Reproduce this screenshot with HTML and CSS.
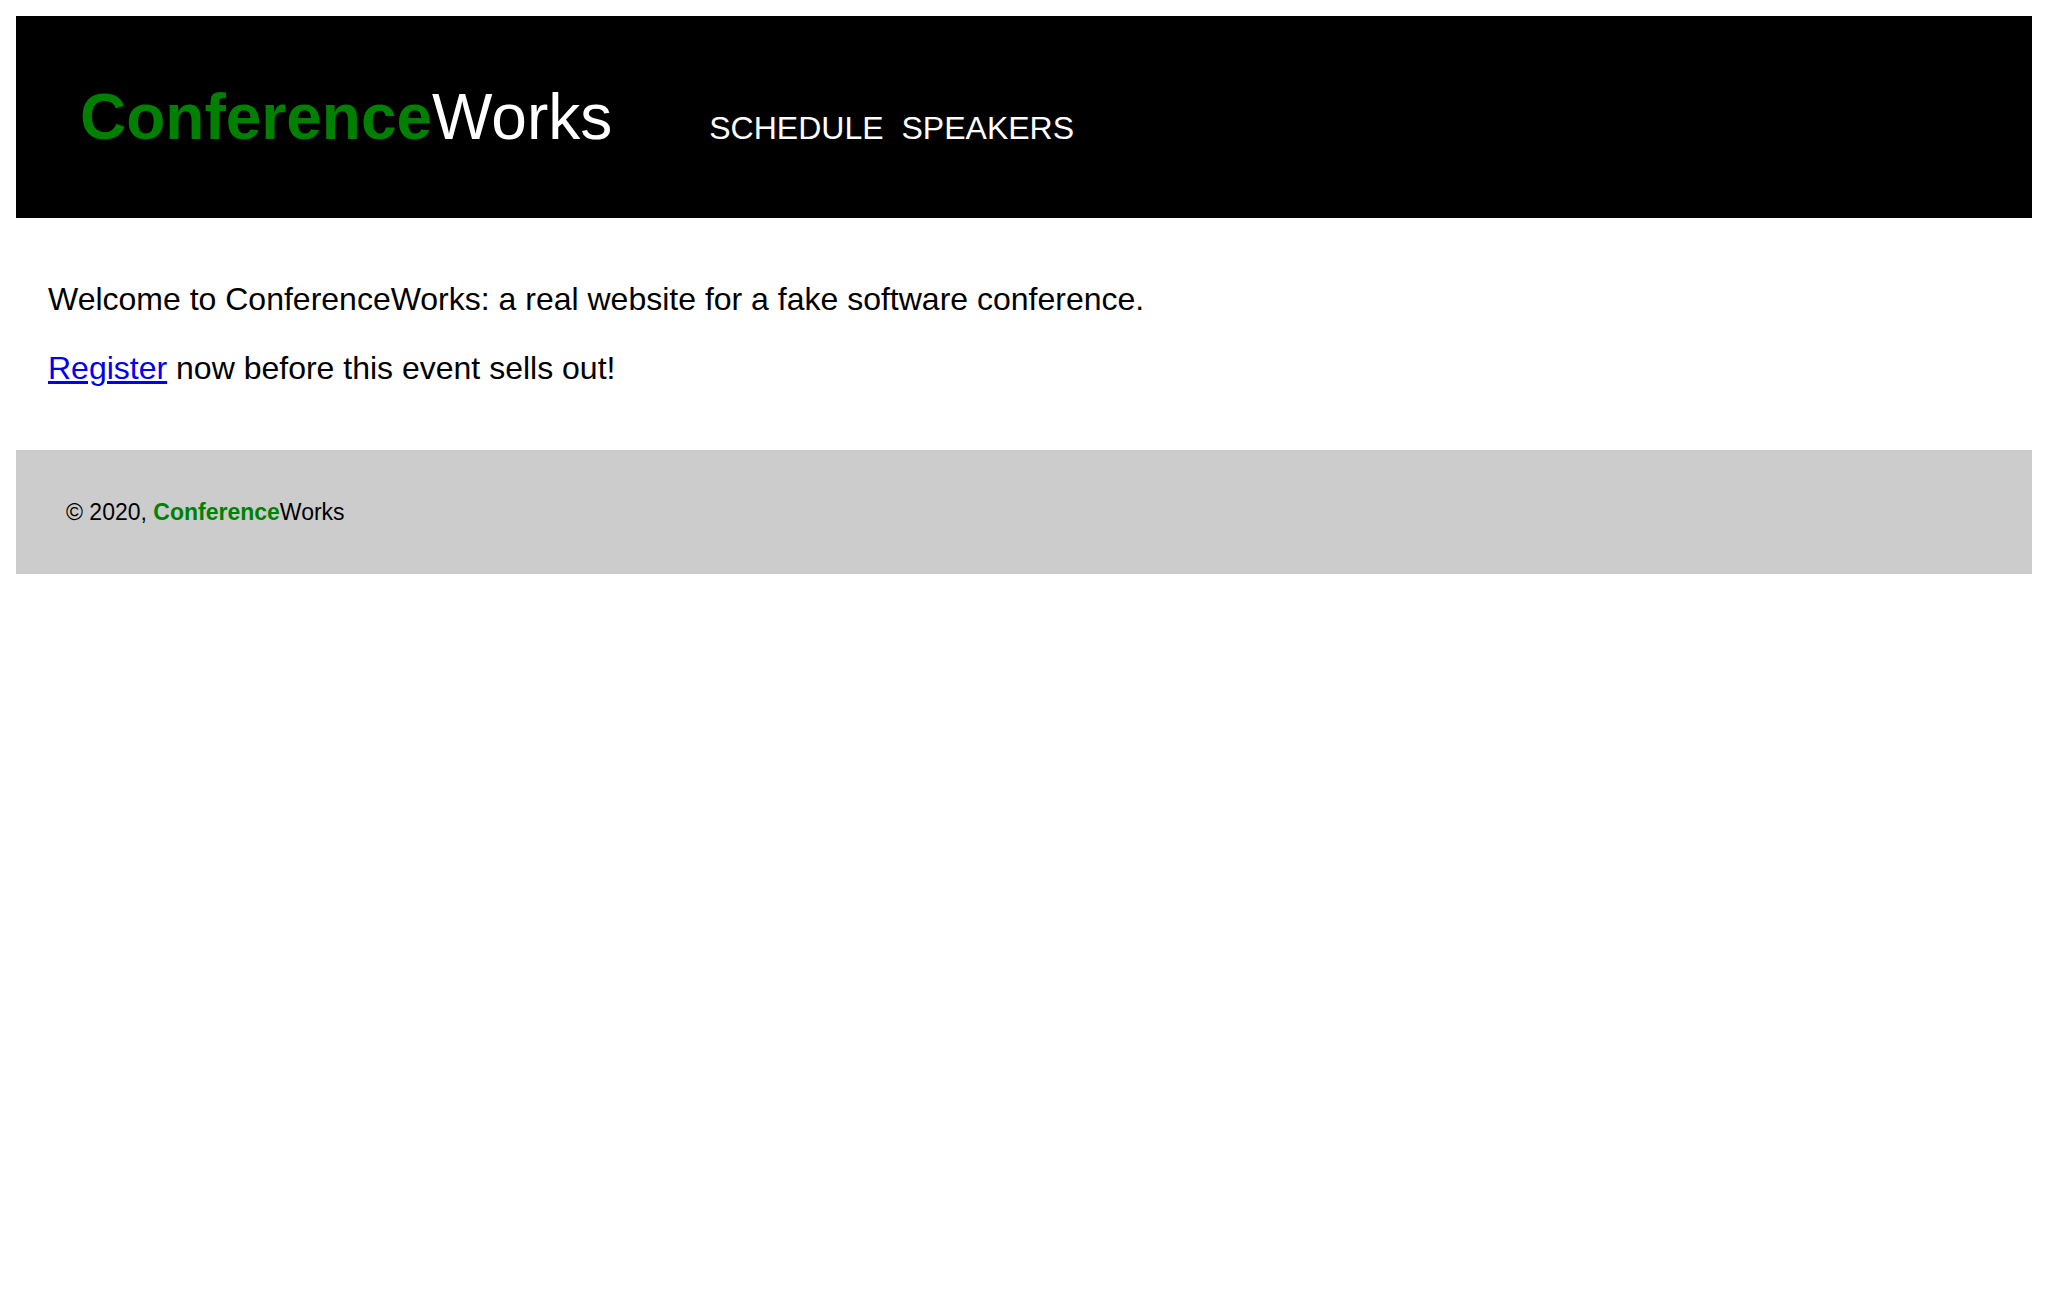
FILE: index.html
```html
<!DOCTYPE html>
<html lang="en">
<head>
<meta charset="utf-8">
<title>ConferenceWorks</title>
<link rel="stylesheet" href="styles.css">
</head>
<body>
<header class="site-header">
  <div class="logo"><span class="brand-strong">Conference</span>Works</div>
  <nav class="main-nav">
    <a href="#" class="nav-link">SCHEDULE</a>
    <a href="#" class="nav-link">SPEAKERS</a>
  </nav>
</header>
<main class="content">
  <p class="lead">Welcome to ConferenceWorks: a real website for a fake software conference.</p>
  <p class="lead"><a href="#" class="register">Register</a> now before this event sells out!</p>
</main>
<footer class="site-footer">
  &copy; 2020, <span class="brand-strong">Conference</span>Works
</footer>
</body>
</html>
```

FILE: styles.css
```css
html, body {
  background: #ffffff;
}

body {
  margin: 16px;
  font-family: "Liberation Sans", Arial, sans-serif;
  color: #000000;
}

.site-header {
  background: #000000;
  color: #ffffff;
  padding: 64px;
  display: flex;
  align-items: baseline;
  gap: 97px;
}

.logo {
  font-size: 64px;
  line-height: normal;
}

.brand-strong {
  color: #008000;
  font-weight: bold;
}

.main-nav {
  display: flex;
  gap: 18px;
}

.nav-link {
  color: #ffffff;
  text-decoration: none;
  font-size: 32px;
}

.content {
  padding: 31px 32px;
}

.lead {
  font-size: 32px;
  margin: 32px 0;
}

.register {
  color: #0000ee;
}

.site-footer {
  background: #cccccc;
  padding: 49px 50px 48px;
  font-size: 23px;
}
```
